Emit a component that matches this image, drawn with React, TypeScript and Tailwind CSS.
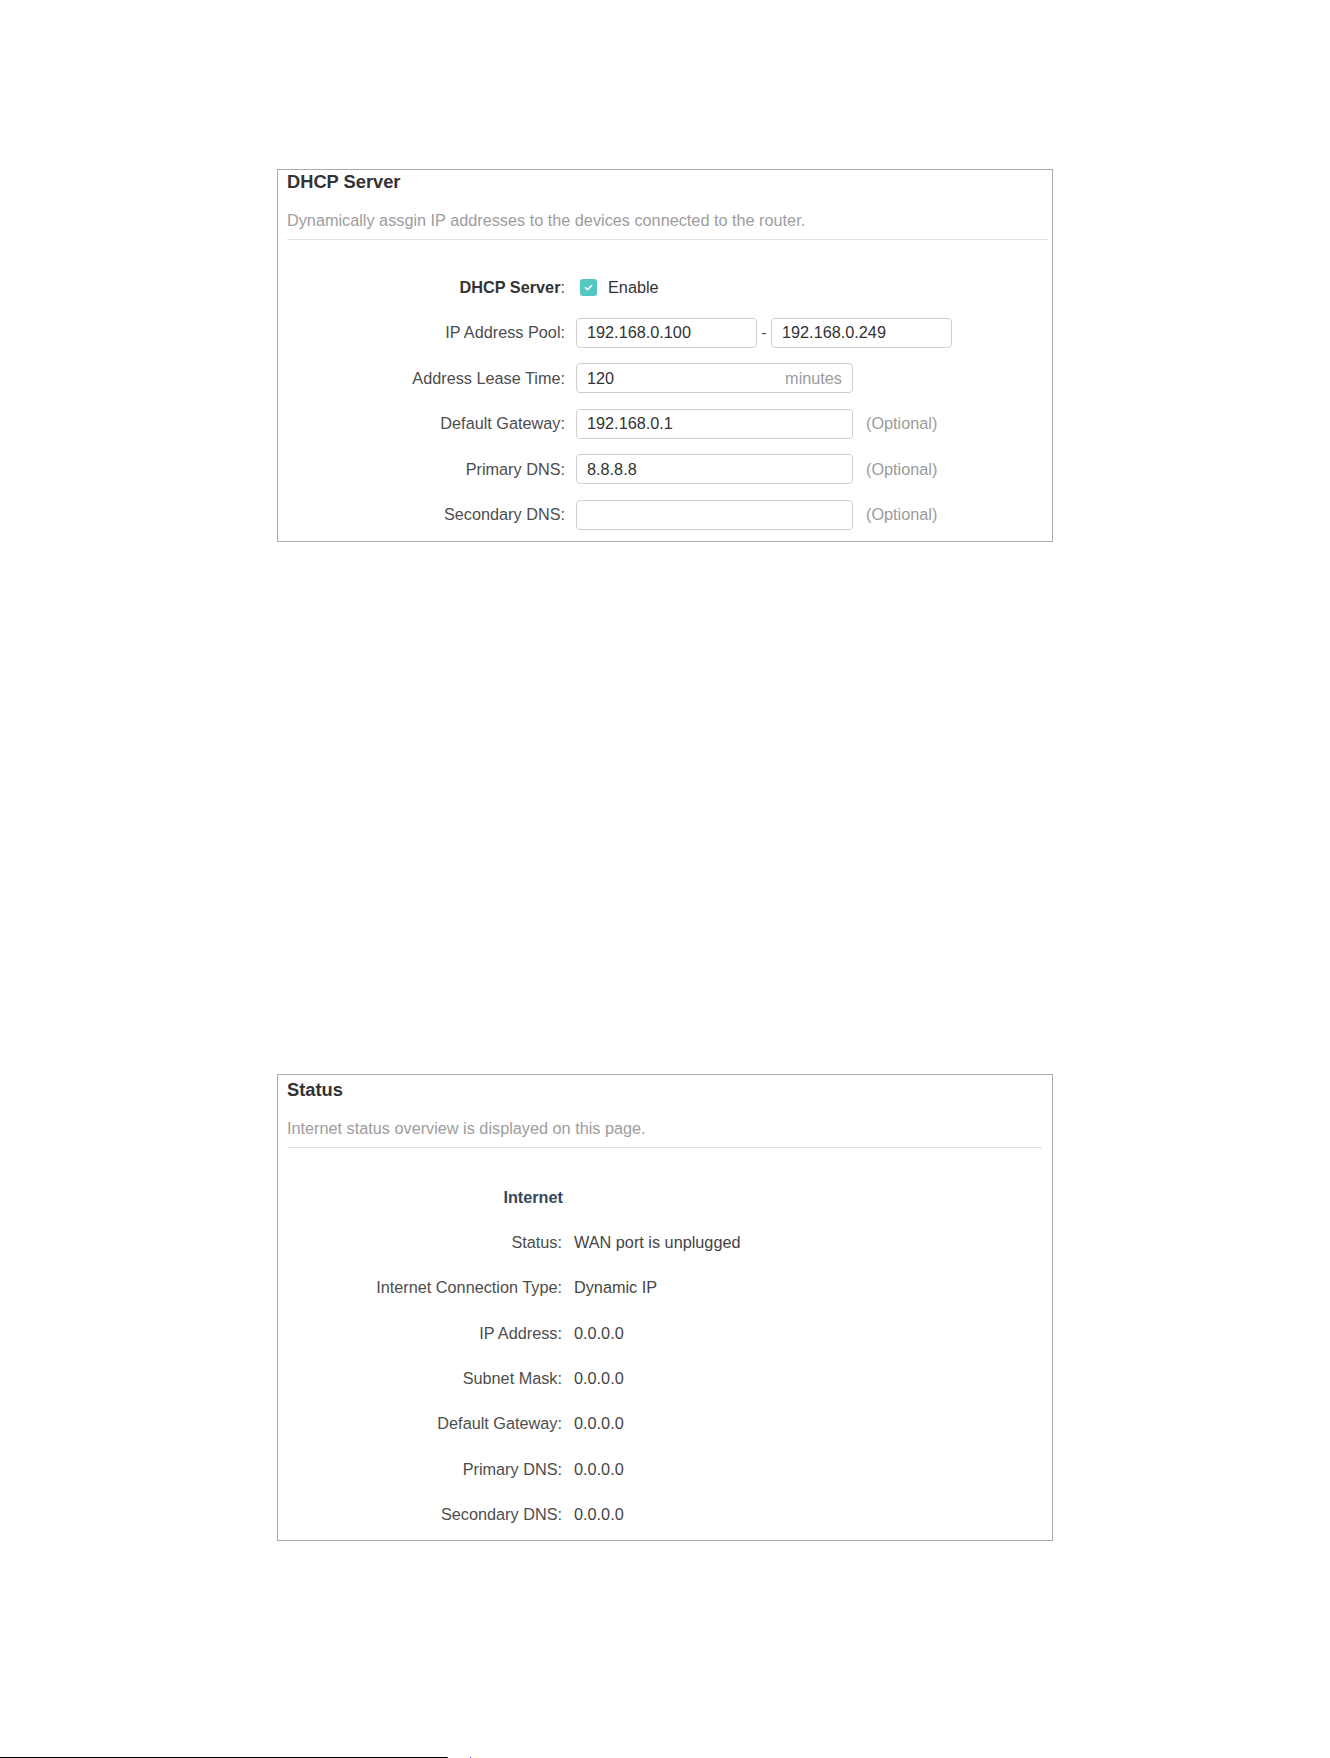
import React from "react";

const labelCls = "shrink-0 text-right text-[16.25px] text-[#4d4d4d]";

function TextInput({ value, width }: { value: string; width: string }) {
  return (
    <input
      readOnly
      defaultValue={value}
      className={`${width} h-[30px] rounded-[4px] border border-[#cfcfcf] bg-white px-[10px] text-[16.25px] text-[#333] outline-none`}
    />
  );
}

function FormRow({ label, children }: { label: React.ReactNode; children: React.ReactNode }) {
  return (
    <div className="flex h-[30px] items-center">
      <div className={`${labelCls} w-[287px]`}>{label}</div>
      <div className="ml-[11px] flex items-center">{children}</div>
    </div>
  );
}

function Optional() {
  return <span className="ml-[13px] text-[16.25px] text-[#9b9b9b]">(Optional)</span>;
}

function StatusRow({ label, value }: { label: string; value: string }) {
  return (
    <div className="flex h-[30px] items-center">
      <div className={`${labelCls} w-[284px]`}>{label}:</div>
      <div className="ml-[12px] text-[16.25px] text-[#444]">{value}</div>
    </div>
  );
}

function DhcpServerCard() {
  return (
    <section className="ml-[277px] w-[776px] border border-[#ababab] bg-white pb-[11px]">
      <div className="pl-[9px] pr-[4px]">
        <h2 className="text-[18.3px] font-bold leading-[24px] text-[#333]">DHCP Server</h2>
        <p className="mt-[14px] text-[16.25px] leading-[24px] text-[#9d9d9d]">
          Dynamically assgin IP addresses to the devices connected to the router.
        </p>
        <div className="mt-[7px] h-px bg-[#e1e1e1]" />
      </div>

      <div className="mt-[32px] flex flex-col gap-[15.5px]">
        <FormRow
          label={
            <>
              <span className="font-bold text-[#333]">DHCP Server</span>
              <span>:</span>
            </>
          }
        >
          <span className="ml-[4px] flex h-[17px] w-[17px] items-center justify-center rounded-[3px] bg-[#55c7c2]">
            <svg width="11" height="11" viewBox="0 0 12 12" fill="none">
              <path d="M2.6 6.3 L5 8.5 L9.4 3.8" stroke="#fff" strokeWidth="1.7" strokeLinecap="round" strokeLinejoin="round" />
            </svg>
          </span>
          <span className="ml-[11px] text-[16.25px] text-[#333]">Enable</span>
        </FormRow>

        <FormRow label="IP Address Pool:">
          <TextInput value="192.168.0.100" width="w-[181px]" />
          <span className="w-[14px] text-center text-[16.25px] text-[#555]">-</span>
          <TextInput value="192.168.0.249" width="w-[181px]" />
        </FormRow>

        <FormRow label="Address Lease Time:">
          <div className="flex h-[30px] w-[277px] items-center justify-between rounded-[4px] border border-[#cfcfcf] bg-white px-[10px] text-[16.25px]">
            <input readOnly defaultValue="120" className="w-[120px] bg-transparent text-[#333] outline-none" />
            <span className="text-[#9b9b9b]">minutes</span>
          </div>
        </FormRow>

        <FormRow label="Default Gateway:">
          <TextInput value="192.168.0.1" width="w-[277px]" />
          <Optional />
        </FormRow>

        <FormRow label="Primary DNS:">
          <TextInput value="8.8.8.8" width="w-[277px]" />
          <Optional />
        </FormRow>

        <FormRow label="Secondary DNS:">
          <TextInput value="" width="w-[277px]" />
          <Optional />
        </FormRow>
      </div>
    </section>
  );
}

function StatusCard() {
  const rows: [string, string][] = [
    ["Status", "WAN port is unplugged"],
    ["Internet Connection Type", "Dynamic IP"],
    ["IP Address", "0.0.0.0"],
    ["Subnet Mask", "0.0.0.0"],
    ["Default Gateway", "0.0.0.0"],
    ["Primary DNS", "0.0.0.0"],
    ["Secondary DNS", "0.0.0.0"],
  ];
  return (
    <section className="ml-[277px] mt-[532px] w-[776px] border border-[#ababab] bg-white pb-[10.5px]">
      <div className="pl-[9px] pr-[10px] pt-[3px]">
        <h2 className="text-[18.3px] font-bold leading-[24px] text-[#333]">Status</h2>
        <p className="mt-[14px] text-[16.25px] leading-[24px] text-[#9d9d9d]">
          Internet status overview is displayed on this page.
        </p>
        <div className="mt-[7px] h-px bg-[#e1e1e1]" />
      </div>

      <div className="mt-[34.5px] flex flex-col gap-[15.3px]">
        <div className="flex h-[30px] items-center">
          <div className="w-[285px] shrink-0 text-right text-[16.25px] font-bold text-[#34475b]">Internet</div>
        </div>
        {rows.map(([l, v]) => (
          <StatusRow key={l} label={l} value={v} />
        ))}
      </div>
    </section>
  );
}

export default function App() {
  return (
    <div className="flex h-[1758px] w-full flex-col bg-white pt-[169px] font-['Liberation_Sans',Arial,sans-serif]">
      <DhcpServerCard />
      <StatusCard />
      <div className="mt-auto flex h-px items-end">
        <div className="h-px w-[447px] bg-black" />
        <div className="h-px w-px bg-[#2a2aff]" />
        <div className="h-px w-[22px]" />
        <div className="h-px w-px bg-[#2a2aff]" />
      </div>
    </div>
  );
}
